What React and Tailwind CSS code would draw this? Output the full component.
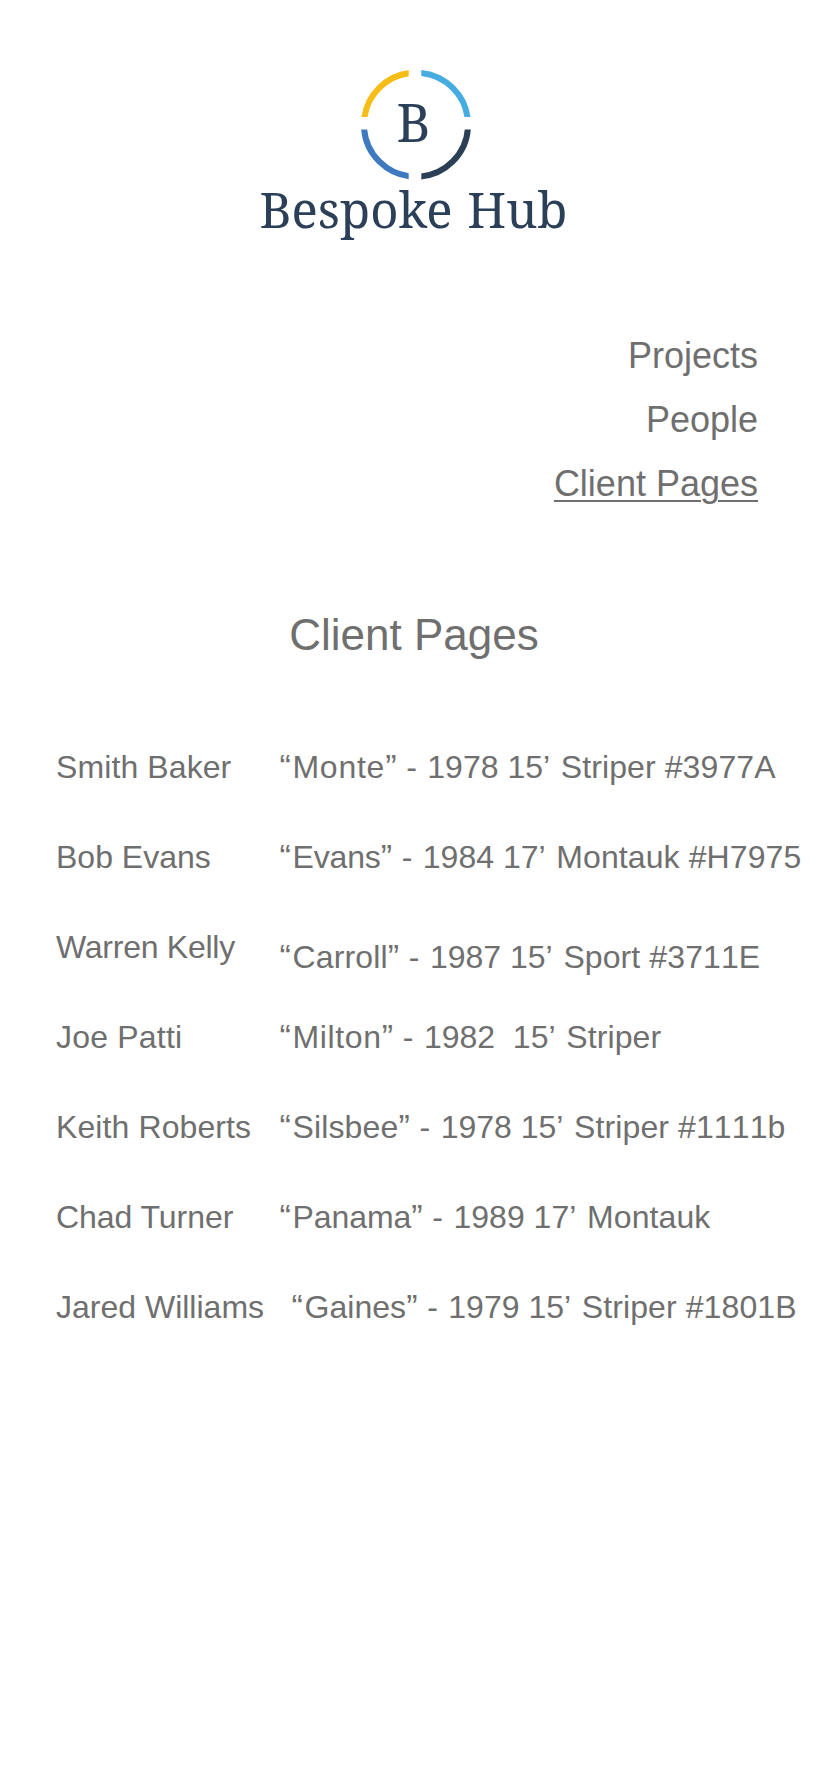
const clients = [
  { name: "Smith Baker", nameClass: "tracking-[0.1px]", boat: "Monte", boatClass: "tracking-[0.75px]", year: "1978 ", length: "15", model: " Striper #3977A" },
  { name: "Bob Evans", boat: "Evans", boatClass: "tracking-[-0.15px]", year: "1984 ", length: "17", model: " Montauk #H7975" },
  { name: "Warren Kelly", nameClass: "tracking-[-0.25px]", boat: "Carroll", boatClass: "tracking-[0.15px]", year: "1987 ", length: "15", model: " Sport #3711E", detailClass: "mt-2.5" },
  { name: "Joe Patti", nameClass: "tracking-[0.2px]", boat: "Milton", boatClass: "tracking-[0.65px]", year: "1982  ", length: "15", model: " Striper" },
  { name: "Keith Roberts", nameClass: "tracking-[0.1px]", boat: "Silsbee", boatClass: "tracking-[0.15px]", year: "1978 ", length: "15", model: " Striper #1111b" },
  { name: "Chad Turner", nameClass: "tracking-[-0.05px]", boat: "Panama", boatClass: "tracking-[-0.05px]", year: "1989 ", length: "17", model: " Montauk" },
  { name: "Jared Williams", boat: "Gaines", boatClass: "tracking-[0.05px]", year: "1979 ", length: "15", model: " Striper #1801B", detailClass: "ml-3" },
];

function Logo() {
  return (
    <svg width="310" height="180" viewBox="258 65 310 180" role="img" aria-label="Bespoke Hub">
      <defs>
        <clipPath id="tl"><rect x="350" y="60" width="57.7" height="57.1" /></clipPath>
        <clipPath id="tr"><rect x="420.3" y="60" width="60" height="57.1" /></clipPath>
        <clipPath id="bl"><rect x="350" y="129.6" width="57.7" height="60" /></clipPath>
        <clipPath id="br"><rect x="420.3" y="129.6" width="60" height="60" /></clipPath>
      </defs>
      <g fill="none" strokeWidth="6">
        <circle cx="415" cy="124.7" r="52" stroke="#f6bd16" clipPath="url(#tl)" />
        <circle cx="415" cy="124.7" r="52" stroke="#47acdf" clipPath="url(#tr)" />
        <circle cx="415" cy="124.7" r="52" stroke="#3f7ac0" clipPath="url(#bl)" />
        <circle cx="415" cy="124.7" r="52" stroke="#2b3f55" clipPath="url(#br)" />
      </g>
      <g fill="#2b4058" className="font-['Noto_Serif','DejaVu_Serif_Condensed','DejaVu_Serif',serif]">
        <text x="395.5" y="142" fontSize="53" textLength="34" lengthAdjust="spacingAndGlyphs">B</text>
        <text x="258.5" y="228.3" fontSize="48.5" textLength="308" lengthAdjust="spacingAndGlyphs" wordSpacing="2">Bespoke Hub</text>
      </g>
    </svg>
  );
}

function Detail({ client }) {
  return (
    <span className={client.detailClass}>
      <span className="text-[34px] leading-none tracking-[1.6px]">“</span>
      <span className={client.boatClass}>{client.boat}</span>
      <span className="text-[34px] leading-none tracking-[0.8px]">”</span>
      {" "}
      <span className="tracking-[1.6px]">-</span>
      {" "}
      {client.year}
      {client.length}
      <span className="tracking-[1.7px]">’</span>
      <span className="tracking-[0.1px]">{client.model}</span>
    </span>
  );
}

export default function App() {
  return (
    <div className="flex h-[1792px] w-[828px] flex-col overflow-hidden bg-white font-['Helvetica_Neue','Liberation_Sans',Arial,sans-serif] text-[#6f6f6f]">
      <header className="flex justify-center pt-[65px]">
        <Logo />
      </header>
      <nav className="mt-[79px] flex flex-col items-end pr-[70px] text-[36px] leading-[64px]">
        <a>Projects</a>
        <a>People</a>
        <a className="underline decoration-2 underline-offset-4">Client Pages</a>
      </nav>
      <h1 className="mt-[87px] text-center text-[44px] leading-[64px]">Client Pages</h1>
      <ul className="mt-[55px] pl-14 text-[32px]">
        {clients.map((c) => (
          <li key={c.name} className="flex h-[90px] items-start leading-[90px] whitespace-pre">
            <span className="mr-[1.5px] w-[222px] shrink-0">
              <span className={c.nameClass}>{c.name}</span>
            </span>
            <span className="flex [font-kerning:none]">
              <Detail client={c} />
            </span>
          </li>
        ))}
      </ul>
    </div>
  );
}
